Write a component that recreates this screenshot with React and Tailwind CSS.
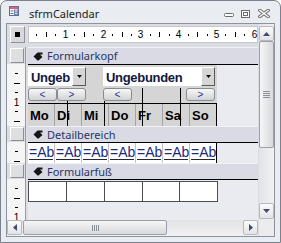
import React from 'react';

const CM = 37.8;

function HRuler() {
  const ticks = [];
  for (let i = 1; i < 28; i++) {
    const x = Math.round(-1 + (i * CM) / 4) + 0.5;
    if (i % 4 === 0) {
      ticks.push(
        <text key={i} x={x} y="12" textAnchor="middle" fontSize="10" fill="#000">
          {i / 4}
        </text>
      );
    } else if (i % 2 === 0) {
      ticks.push(<line key={i} x1={x} x2={x} y1="6" y2="11" stroke="#000" />);
    } else {
      ticks.push(<line key={i} x1={x} x2={x} y1="8" y2="10" stroke="#000" />);
    }
  }
  return (
    <svg width="230" height="17" className="block">
      {ticks}
    </svg>
  );
}

function VRuler({ h }) {
  const ticks = [];
  for (let i = 1; (i * CM) / 4 < h + 8; i++) {
    const y = Math.round((i * CM) / 4) + 0.5;
    if (i % 4 === 0) {
      ticks.push(
        <text key={i} x="9.5" y={y + 3.5} textAnchor="middle" fontSize="10" fill="#000">
          {i / 4}
        </text>
      );
    } else if (i % 2 === 0) {
      ticks.push(<line key={i} x1="7" x2="13" y1={y} y2={y} stroke="#000" />);
    } else {
      ticks.push(<line key={i} x1="8" x2="11" y1={y} y2={y} stroke="#000" />);
    }
  }
  return (
    <svg width="18" height={h} className="block">
      {ticks}
    </svg>
  );
}

const HandIcon = () => (
  <svg width="10" height="9" viewBox="0 0 10 9" className="block">
    <path d="M0.5 4.5 L4.5 0.5 L9.5 0.5 L9.5 2.5 L7 2.5 L9.5 5 L5.5 8.5 L4.5 8.5 Z" fill="#151515" />
  </svg>
);

function Sep() {
  return <div className="w-[3px] border-l border-[#9b9ca2] bg-[#dcdde3]" />;
}

function SectionBar({ label, tall }) {
  return (
    <div className={tall ? 'flex h-[17px]' : 'flex h-[16px]'}>
      <div className="w-[18px] pl-[3px] py-[1px] flex">
        <div className="w-[14px] h-full bg-[#dfdfe2] border border-t-white border-l-white border-b-[#8f9096] border-r-[#8f9096]" />
      </div>
      <Sep />
      <div className="w-[230px] bg-[#d9dae4] border-t border-[#f1f1f6] flex items-center pl-[5px] text-[11px] text-[#26366a] font-['Noto_Sans',sans-serif]">
        <HandIcon />
        <span className="ml-[4px] leading-[14px]">{label}</span>
      </div>
    </div>
  );
}

function DropBtn() {
  return (
    <div className="w-[14px] h-full bg-[#d6d6d6] border border-t-white border-l-white border-b-[#5a5a5a] border-r-[#5a5a5a] flex items-center justify-center">
      <svg width="5" height="3" className="block">
        <path d="M0 0 H5 L2.5 3 Z" fill="#000" />
      </svg>
    </div>
  );
}

function NavBtn({ children }) {
  return (
    <div className="w-[29px] h-full rounded-[3px] border border-[#878b92] bg-gradient-to-b from-[#f7f7f7] to-[#d3d3d5] flex items-center justify-center text-[10px] leading-[10px] text-[#28368c]">
      {children}
    </div>
  );
}

function ScrollBtn({ dir, cls }) {
  const paths = {
    up: <path d="M0 4 L3.5 0 L7 4 Z" />,
    down: <path d="M0 0 L7 0 L3.5 4 Z" />,
    left: <path d="M4 0 L4 7 L0 3.5 Z" />,
    right: <path d="M0 0 L4 3.5 L0 7 Z" />,
  };
  const vert = dir === 'up' || dir === 'down';
  return (
    <div className={`${cls} rounded-[2px] border border-[#b5b9c0] bg-gradient-to-b from-[#fbfbfb] to-[#e4e4e6] flex items-center justify-center`}>
      <svg width={vert ? 7 : 4} height={vert ? 4 : 7} className="block" fill="#3d4c6e">
        {paths[dir]}
      </svg>
    </div>
  );
}

const days = ['Mo', 'Di', 'Mi', 'Do', 'Fr', 'Sa', 'So'];

export default function App() {
  return (
    <div className="w-[281px] h-[243px] bg-white font-['Liberation_Sans',Arial,sans-serif]">
      <div className="w-full h-full flex flex-col border border-[#7b828d] rounded-t-[7px] bg-[#e9ecf0]">
        {/* Titelleiste */}
        <div className="h-[22px] flex items-start">
          <svg width="10" height="10" viewBox="0 0 10 10" className="block ml-[8px] mt-[5px]">
            <rect x="0.5" y="0.5" width="9" height="9" fill="#fff" stroke="#5d6f9c" />
            <rect x="1" y="1" width="8" height="2" fill="#e0607c" />
            <rect x="1.5" y="4.5" width="3" height="1" fill="#5d6f9c" />
            <rect x="5.5" y="4" width="3" height="2" fill="none" stroke="#5d6f9c" strokeWidth="0.8" />
            <rect x="1.5" y="7" width="3" height="1" fill="#5d6f9c" />
            <rect x="5.5" y="6.8" width="3" height="1.8" fill="none" stroke="#5d6f9c" strokeWidth="0.8" />
          </svg>
          <span className="ml-[10px] mt-[6px] text-[11px] leading-[14px] text-[#1b1b1b] font-['Noto_Sans',sans-serif]">
            sfrmCalendar
          </span>
          <svg width="10" height="4" className="block ml-auto mt-[12px]">
            <rect x="0.5" y="0.5" width="9" height="3" rx="1" fill="#fff" stroke="#6b6b6b" />
          </svg>
          <svg width="9" height="8" className="block ml-[7px] mt-[9px]">
            <rect x="0.5" y="0.5" width="8" height="7" fill="#fff" stroke="#6b6b6b" />
            <rect x="2.5" y="2.5" width="4" height="3" fill="none" stroke="#6b6b6b" />
          </svg>
          <svg width="12" height="9" className="block ml-[8px] mt-[8px] mr-[10px]">
            <path d="M1.8 1.3 L10.2 7.7 M10.2 1.3 L1.8 7.7" stroke="#6b6b6b" strokeWidth="3.2" strokeLinecap="square" />
            <path d="M1.8 1.3 L10.2 7.7 M10.2 1.3 L1.8 7.7" stroke="#fff" strokeWidth="1.3" strokeLinecap="square" />
          </svg>
        </div>

        {/* Arbeitsbereich */}
        <div className="mx-[5px] h-[214px] border border-[#8d939c] bg-[#dcdde3] flex flex-col">
          <div className="flex h-[196px]">
            <div className="w-[251px] flex flex-col">
              <div className="h-[2px]" />
              {/* Lineal */}
              <div className="flex h-[17px]">
                <div className="w-[3px]" />
                <div className="w-[15px] bg-[#d8d8dc] border border-t-white border-l-white border-b-[#909096] border-r-[#909096] flex items-center justify-center">
                  <div className="w-[5px] h-[5px] bg-black" />
                </div>
                <div className="w-[3px]" />
                <div className="w-[230px] bg-white shadow-[inset_0_0_0_1px_#c6c7cc]">
                  <HRuler />
                </div>
              </div>
              <div className="h-[4px]" />

              <SectionBar label="Formularkopf" tall />

              {/* Formularkopf */}
              <div className="flex h-[62px]">
                <div className="w-[18px] bg-[#f5f5f6]">
                  <VRuler h={62} />
                </div>
                <Sep />
                <div className="w-[230px] border-t border-black flex relative">
                  <div className="w-[189px] bg-[#d5d5d6] flex flex-col">
                    <div className="flex mt-[2px] h-[19px]">
                      <div className="w-[58px] flex">
                        <div className="w-[44px] bg-white whitespace-nowrap pl-[3px] pt-[3px] text-[13px] leading-[16px] font-bold tracking-[-0.3px] text-[#101840]">
                          Ungeb
                        </div>
                        <DropBtn />
                      </div>
                      <div className="w-[17px]" />
                      <div className="w-[112px] flex">
                        <div className="w-[98px] bg-white whitespace-nowrap pl-[3px] pt-[3px] text-[13px] leading-[16px] font-bold tracking-[-0.3px] text-[#101840]">
                          Ungebunden
                        </div>
                        <DropBtn />
                      </div>
                    </div>
                    <div className="flex mt-[2px] h-[13px]">
                      <NavBtn>&lt;</NavBtn>
                      <NavBtn>&gt;</NavBtn>
                      <div className="w-[17px]" />
                      <NavBtn>&lt;</NavBtn>
                      <div className="w-[54px]" />
                      <NavBtn>&gt;</NavBtn>
                    </div>
                    <div className="mt-[2px] flex-1 border-t border-black flex overflow-hidden">
                      {days.map((d, i) => (
                        <div
                          key={d}
                          className={
                            i === 6
                              ? 'w-[27px] border-r border-black pl-[2px] text-[13px] leading-[23px] font-bold text-black'
                              : 'w-[27px] border-r border-[#a4a4a8] pl-[2px] text-[13px] leading-[23px] font-bold text-black'
                          }
                        >
                          {d}
                        </div>
                      ))}
                    </div>
                  </div>
                  <div className="flex-1 bg-[#e9ebf0]" />
                  <div className="absolute left-[39px] top-[36px] w-px h-[25px] bg-black" />
                  <div className="absolute left-[76px] top-[36px] w-px h-[25px] bg-black" />
                  <div className="absolute left-[114px] top-[23px] w-px h-[38px] bg-black" />
                  <div className="absolute left-[152px] top-[23px] w-px h-[38px] bg-black" />
                </div>
              </div>

              <SectionBar label="Detailbereich" />

              {/* Detailbereich */}
              <div className="flex h-[21px]">
                <div className="w-[18px] bg-[#f5f5f6]">
                  <VRuler h={21} />
                </div>
                <Sep />
                <div className="w-[230px] border-t border-black flex">
                  {days.map((d, i) => (
                    <div
                      key={d}
                      className={
                        i === 6
                          ? 'w-[27px] bg-white border-r border-black px-[1px] pt-[2px]'
                          : 'w-[27px] bg-white border-r border-[#c2c2c6] px-[1px] pt-[2px]'
                      }
                    >
                      <div className="text-[14px] leading-[14px] border-b border-[#26262e] text-[#1c2b7c]">=Ab</div>
                    </div>
                  ))}
                  <div className="flex-1 bg-[#e9ebf0]" />
                </div>
              </div>

              <SectionBar label="Formularfuß" />

              {/* Formularfuß */}
              <div className="flex h-[41px]">
                <div className="w-[18px] bg-[#f5f5f6] overflow-hidden">
                  <VRuler h={41} />
                </div>
                <Sep />
                <div className="w-[230px] border-t border-black bg-[#e9ebf0] flex flex-col">
                  <div className="flex mt-[1px] h-[21px]">
                    <div className="w-[38px] bg-white border-y border-l border-[#4d4d52]" />
                    <div className="w-[38px] bg-white border-y border-l border-[#4d4d52]" />
                    <div className="w-[38px] bg-white border-y border-l border-[#4d4d52]" />
                    <div className="w-[37px] bg-white border-y border-l border-[#4d4d52]" />
                    <div className="w-[39px] bg-white border border-[#4d4d52]" />
                  </div>
                </div>
              </div>
            </div>
            <div className="w-px" />

            {/* vertikale Bildlaufleiste */}
            <div className="w-[15px] flex flex-col bg-gradient-to-r from-[#e2e3e6] to-[#f2f2f4] pt-[2px] pb-[1px]">
              <ScrollBtn dir="up" cls="h-[15px]" />
              <div className="h-[107px] rounded-[2px] border border-[#9aa0a9] bg-gradient-to-r from-[#f6f6f7] to-[#d8d9dc] flex flex-col items-center justify-center gap-[1px]">
                <div className="w-[7px] h-px bg-[#8a9098]" />
                <div className="w-[7px] h-px bg-[#8a9098]" />
                <div className="w-[7px] h-px bg-[#8a9098]" />
                <div className="w-[7px] h-px bg-[#8a9098]" />
              </div>
              <div className="flex-1" />
              <ScrollBtn dir="down" cls="h-[16px]" />
            </div>
          </div>

          {/* horizontale Bildlaufleiste */}
          <div className="flex h-[16px]">
            <div className="w-[251px] flex pb-[1px] bg-gradient-to-b from-[#e2e3e6] to-[#f2f2f4]">
              <ScrollBtn dir="left" cls="w-[15px]" />
              <div className="ml-[1px] w-[144px] rounded-[2px] border border-[#9aa0a9] bg-gradient-to-b from-[#f6f6f7] to-[#d8d9dc] flex items-center justify-center gap-[1px]">
                <div className="w-px h-[6px] bg-[#8a9098]" />
                <div className="w-px h-[6px] bg-[#8a9098]" />
                <div className="w-px h-[6px] bg-[#8a9098]" />
                <div className="w-px h-[6px] bg-[#8a9098]" />
              </div>
              <div className="flex-1" />
              <ScrollBtn dir="right" cls="w-[15px]" />
            </div>
            <div className="w-px" />
            <div className="w-[15px] bg-[#ececee]" />
          </div>
        </div>
      </div>
    </div>
  );
}
